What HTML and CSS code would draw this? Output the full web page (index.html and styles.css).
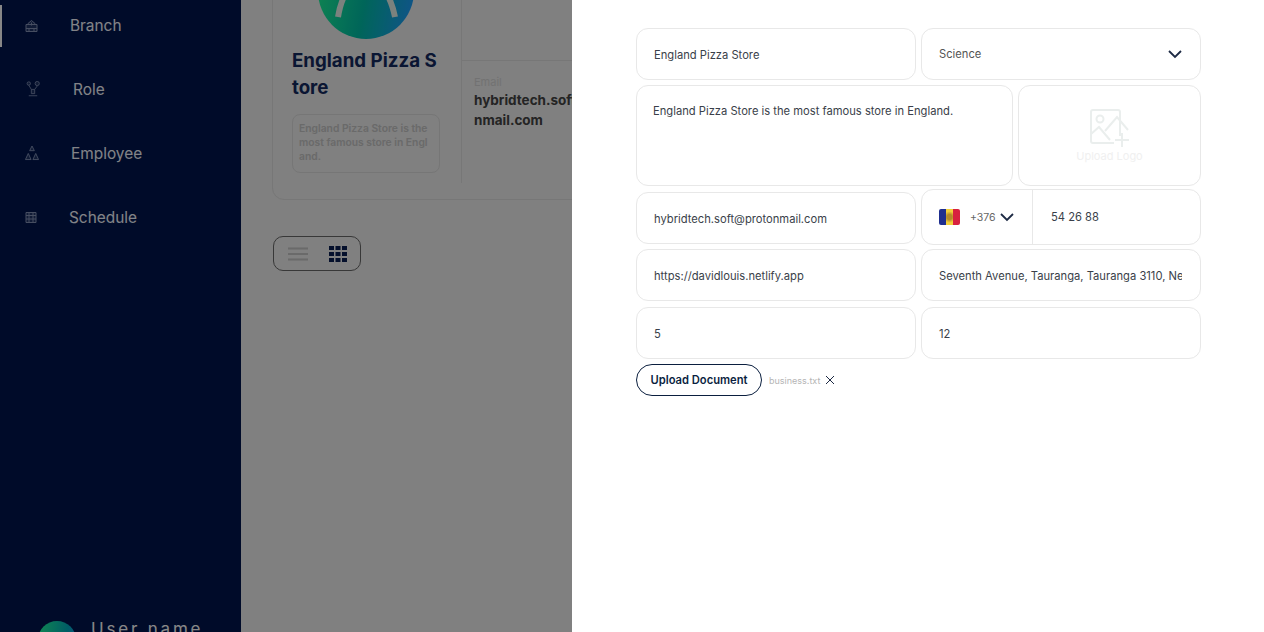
FILE: index.html
```html
<!DOCTYPE html>
<html lang="en">
<head>
<meta charset="utf-8">
<title>Branch</title>
<link rel="stylesheet" href="styles.css">
</head>
<body>
<div class="page">
  <aside class="sidebar">
    <nav class="nav">
      <a class="nav-item active">
        <svg class="nav-icon w13" viewBox="0 0 13 13"><path d="M1 12V5h11v7zM1 9h11M3 5V4l3.500-3L10 4v1M6.500 3v3M4 9v3M9 9v3" /></svg>
        <span>Branch</span>
      </a>
      <a class="nav-item">
        <svg class="nav-icon w16" viewBox="0 0 16 19"><circle cx="3" cy="3" r="2"/><circle cx="13" cy="3" r="2.500"/><path d="M3 5l3 5M13 6l-3 4M6 10h4v5H6zM3 17.500h10"/></svg>
        <span>Role</span>
      </a>
      <a class="nav-item">
        <svg class="nav-icon w14" viewBox="0 0 15 17"><path d="M7.500 1l2.500 5H5zM3.500 9l3 6.500h-6zM11.500 9l3 6.500h-6z"/></svg>
        <span>Employee</span>
      </a>
      <a class="nav-item">
        <svg class="nav-icon w12" viewBox="0 0 12 13"><path d="M1 2h10v10H1zM1 5h10M4 2v10M8 2v10M1 8.500h10"/></svg>
        <span>Schedule</span>
      </a>
    </nav>
    <div class="user">
      <span class="avatar"></span>
      <span class="user-name">User name</span>
    </div>
  </aside>

  <main class="content">
    <section class="card">
      <div class="card-left">
        <div class="logo">
          <svg class="logo-arc" viewBox="0 0 96 96"><path d="M20 74C24 50 34 38 48 38s24 12 29 36" /></svg>
        </div>
        <h2 class="store-name">England Pizza Store</h2>
        <p class="store-desc">England Pizza Store is the most famous store in England.</p>
      </div>
      <div class="card-right">
        <div class="card-top"></div>
        <div class="info">
          <div class="info-label">Email</div>
          <div class="info-value">hybridtech.soft@proto<br>nmail.com</div>
        </div>
      </div>
    </section>
    <div class="view-toggle">
      <svg class="toggle-list" viewBox="0 0 20 14"><path d="M0 1.500h20M0 7h20M0 12.500h20"/></svg>
      <svg class="toggle-grid" viewBox="0 0 18 16"><path d="M0 0h5v4H0zM6.500 0h5v4h-5zM13 0h5v4h-5zM0 6h5v4H0zM6.500 6h5v4h-5zM13 6h5v4h-5zM0 12h5v4H0zM6.500 12h5v4h-5zM13 12h5v4h-5z"/></svg>
    </div>
  </main>

  <div class="backdrop"></div>

  <aside class="drawer">
    <form class="form">
      <div class="row">
        <div class="field half">England Pizza Store</div>
        <div class="field half select">
          <span>Science</span>
          <svg class="chevron" viewBox="0 0 14 9"><path d="M1 1l6 6 6-6"/></svg>
        </div>
      </div>
      <div class="row row-tall">
        <div class="field area">England Pizza Store is the most famous store in England.</div>
        <div class="field upload">
          <svg class="upload-icon" viewBox="0 0 40 39"><path d="M30 27V3a2 2 0 0 0-2-2H3a2 2 0 0 0-2 2v29a2 2 0 0 0 2 2h21"/><circle cx="10" cy="10" r="3.500"/><path d="M1 25l8-7 11 13M15 22L27 8l11 13M32 24v14M25 31h14"/></svg>
          <span class="upload-label">Upload Logo</span>
        </div>
      </div>
      <div class="row row-phone">
        <div class="field half email">hybridtech.soft@protonmail.com</div>
        <div class="field half phone">
          <div class="dial">
            <span class="flag"><i class="flag-blue"></i><i class="flag-yellow"></i><i class="flag-red"></i></span>
            <span class="code">+376</span>
            <svg class="chevron small" viewBox="0 0 14 9"><path d="M1 1l6 6 6-6"/></svg>
          </div>
          <div class="tel">54 26 88</div>
        </div>
      </div>
      <div class="row row-after-phone">
        <div class="field half">https://davidlouis.netlify.app</div>
        <div class="field half"><span class="clip">Seventh Avenue, Tauranga, Tauranga 3110, New Zealand</span></div>
      </div>
      <div class="row row-loose">
        <div class="field half">5</div>
        <div class="field half">12</div>
      </div>
      <div class="row doc-row">
        <button type="button" class="upload-doc">Upload Document</button>
        <span class="doc-name">business.txt</span>
        <svg class="doc-x" viewBox="0 0 10 10"><path d="M1 1l8 8M9 1l-8 8"/></svg>
      </div>
    </form>
  </aside>
</div>
</body>
</html>
```

FILE: styles.css
```css
* { box-sizing: border-box; }

html, body { margin: 0; height: 100%; }

body {
  font-family: Inter, "Liberation Sans", sans-serif;
  color: #1f2533;
  overflow: hidden;
}

.page {
  position: relative;
  display: flex;
  height: 632px;
  overflow: hidden;
  background: #f1f1f1;
}

/* Sidebar */
.sidebar {
  width: 241px;
  flex: none;
  display: flex;
  flex-direction: column;
  background: #00164f;
  overflow: hidden;
}

.nav {
  display: flex;
  flex-direction: column;
  gap: 21.9px;
  padding-top: 4.5px;
}

.nav-item {
  height: 42px;
  padding-left: 25px;
  display: flex;
  align-items: center;
  gap: 32px;
  font-size: 15.4px;
  color: #f6f8ff;
}

.nav-item.active { box-shadow: inset 2px 0 0 #fff; }

.nav-icon {
  flex: none;
  height: 16px;
  fill: rgba(125, 138, 171, 0.25);
  stroke: #8493b8;
  stroke-width: 1;
}

.w13 { width: 13px; }
.w16 { width: 16px; }
.w14 { width: 14px; }
.w12 { width: 12px; }

.user {
  flex: none;
  margin-top: auto;
  margin-bottom: -29px;
  padding-left: 38px;
  display: flex;
  gap: 15px;
  height: 40px;
}

.avatar {
  width: 38px;
  height: 38px;
  border-radius: 50%;
  background: linear-gradient(100deg, #20ff9a, #00b0c0 70%, #1e9fff);
}

.user-name {
  font-size: 17px;
  letter-spacing: 2.8px;
  color: #fff;
  line-height: 18px;
  margin-top: -1px;
  white-space: nowrap;
}

/* Main content */
.content {
  flex: 1;
  min-width: 0;
  padding-left: 31px;
  overflow: hidden;
}

.card {
  width: 600px;
  height: 260px;
  margin-top: -60px;
  display: flex;
  border: 1px solid #e0e0e0;
  border-radius: 12px;
}

.card-left {
  width: 189px;
  flex: none;
  height: 242px;
  padding: 0 19px;
  border-right: 1px solid #e0e0e0;
}

.logo {
  width: 96px;
  height: 96px;
  margin: 2px 0 0 26px;
  border-radius: 50%;
  background: linear-gradient(100deg, #20ff9a, #00c0a8 50%, #1e9fff 95%);
  overflow: hidden;
}

.logo-arc {
  display: block;
  width: 96px;
  height: 96px;
  fill: none;
  stroke: #e8f5ee;
  stroke-width: 6;
}

.store-name {
  margin: 8px 0 0;
  font-size: 18.7px;
  line-height: 27px;
  font-weight: 700;
  color: #142a60;
  word-break: break-all;
}

.store-desc {
  margin: 13px 0 0;
  padding: 6px 8px 6px 6px;
  width: 148px;
  height: 59px;
  font-size: 10.3px;
  line-height: 14px;
  font-weight: 600;
  color: #c8c8c8;
  border: 1px solid #dfdfdf;
  border-radius: 8px;
  word-break: break-all;
}

.card-right { flex: 1; min-width: 0; }

.card-top {
  height: 120px;
  border-bottom: 1px solid #e0e0e0;
}

.info { padding: 13px 0 0 12px; }

.info-label {
  font-size: 11px;
  line-height: 16px;
  color: #d8d8d8;
}

.info-value {
  font-size: 13.5px;
  line-height: 20px;
  font-weight: 700;
  color: #444;
  white-space: nowrap;
}

.view-toggle {
  width: 88px;
  height: 35px;
  margin: 36px 0 0 1px;
  display: flex;
  align-items: center;
  gap: 21px;
  padding-left: 14px;
  border: 1px solid #6a6a6a;
  border-radius: 10px;
}

.toggle-list {
  width: 20px;
  height: 14px;
  fill: none;
  stroke: #c8c8c8;
  stroke-width: 2;
}

.toggle-grid {
  width: 18px;
  height: 16px;
  fill: #0b1f54;
}

.backdrop {
  position: absolute;
  inset: 0;
  background: rgba(0, 0, 0, 0.47);
}

/* Drawer */
.drawer {
  position: absolute;
  top: 0;
  right: 0;
  bottom: 0;
  width: 692px;
  padding: 28px 63px 0 64px;
  background: #fff;
}

.form { display: flex; flex-direction: column; gap: 5px; }

.row { display: flex; gap: 5px; align-items: center; }
.row-tall { align-items: stretch; height: 101px; }
.row-phone { margin-top: -2px; align-items: flex-end; }
.row-after-phone { margin-top: -1px; }
.row-loose { margin-top: 1px; }

.field {
  height: 52px;
  display: flex;
  align-items: center;
  padding: 1px 18px 0 17px;
  font-size: 11.2px;
  color: #3a3f4a;
  background: #fff;
  border: 1px solid #e8e8e8;
  border-radius: 12px;
  min-width: 0;
}

.half { width: 280px; flex: none; }
.email { margin-bottom: 1px; }

.select {
  justify-content: space-between;
  padding-top: 0;
  color: #555;
}

.chevron {
  width: 14px;
  height: 9px;
  fill: none;
  stroke: #1d2a44;
  stroke-width: 1.800;
}

.area {
  width: 377px;
  height: 101px;
  flex: none;
  align-items: flex-start;
  padding: 18px 17px 0 16px;
}

.upload {
  width: 183px;
  height: 101px;
  flex: none;
  flex-direction: column;
  padding: 23px 0 0;
}

.upload-icon {
  width: 40px;
  height: 39px;
  fill: none;
  stroke: #eaeeed;
  stroke-width: 2;
}

.upload-label {
  margin-top: 1px;
  font-size: 11px;
  color: #f0f0f0;
}

.phone {
  height: 56px;
  padding: 0;
  align-items: stretch;
}

.dial {
  width: 111px;
  flex: none;
  display: flex;
  align-items: center;
  padding-left: 17px;
  border-right: 1px solid #e8e8e8;
}

.flag {
  width: 21px;
  height: 16px;
  display: flex;
  border-radius: 2px;
  overflow: hidden;
}

.flag i { flex: 1; }
.flag-blue { background: #1f2f8f; }
.flag-yellow { background: radial-gradient(circle, #b58a2a 30%, #f2cf3a 65%); }
.flag-red { background: #d8213f; }

.code {
  margin-left: 10px;
  font-size: 10.500px;
  color: #666;
}

.chevron.small { margin-left: 4px; }

.tel {
  display: flex;
  align-items: center;
  padding-left: 18px;
}

.clip {
  display: block;
  width: 100%;
  overflow: hidden;
  white-space: nowrap;
}

.doc-row { gap: 0; }

.upload-doc {
  width: 126px;
  height: 32px;
  padding: 0;
  font-family: inherit;
  font-size: 11.2px;
  font-weight: 600;
  color: #0b1f3f;
  background: #fff;
  border: 1px solid #0b1f3f;
  border-radius: 16px;
}

.doc-name {
  margin-left: 7px;
  font-size: 9px;
  color: #b5b5b5;
}

.doc-x {
  width: 10px;
  height: 10px;
  margin-left: 5px;
  fill: none;
  stroke: #1d2a44;
  stroke-width: 1;
}
```
